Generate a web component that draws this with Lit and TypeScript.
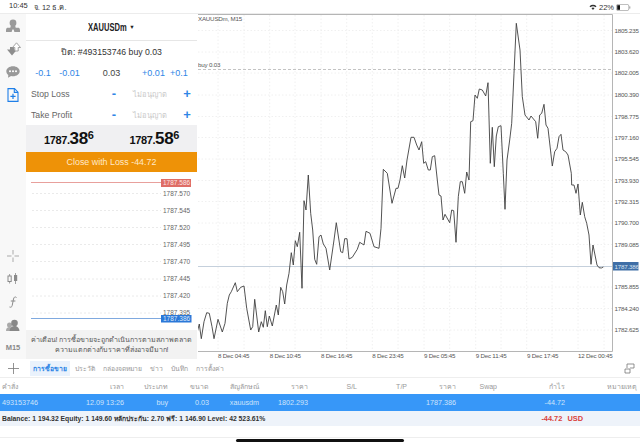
import { LitElement, html, css, svg } from "lit";
import { customElement } from "lit/decorators.js";

const PTS = "198.3,331.7 200.3,324 202.3,338.7 205,321.7 207.7,312.7 210.3,313.3 213,326.7 215,338.7 219,319.3 223.3,332 226,323.3 228.3,303.3 230.3,295 232.3,291.7 236.3,282.7 238.3,291.7 241.7,287.3 245,286 247.7,308.3 251.7,330 253.7,326.7 255.7,299.3 259.7,332 262.3,321.7 264.3,327.3 266.3,310.7 268.3,326.7 270.3,316 273.3,326 277.3,305 279.3,315 281.7,287.3 283.7,291.7 285.7,304 287.7,285 290,273.3 292.3,252.7 294.3,265 296.3,240.7 298.3,246.7 300.7,232.3 303,288.3 305,200.7 307,210 309.3,175 311.7,213.3 313.7,230 315.7,259.3 317.7,264.3 320,236.7 322,235 324.3,244 327,248.3 330.7,270 335,240 337.3,222.7 341.7,251.7 343.7,252.7 345.7,238.7 348,238.7 350,259 353.3,257.3 358.3,249.3 360.7,242.3 365,245 367,231.3 371,233.3 375,246.7 380,248.3 382,228.3 384.3,169.3 388.3,173.3 393,203.3 397,188.3 399,188.3 401,180 403.3,165.7 405.7,178 408,160 412,137.3 415,137.3 417.7,145 420,150 422.7,141.7 424.7,163.3 426.7,161.7 429.3,170 431.3,170 433.3,156.7 435.7,155.7 438.3,180 440,195 442,196 444,220 446,214.3 450.7,222.7 452.7,210 454.7,210.7 457,242.3 459.3,196.7 461.3,181.7 463.3,181.7 465.7,193.3 467.7,172 470,180 471.7,121.7 474,120.7 476,95 478.3,98.3 480.3,89 483.3,90 486.7,96 489,82.7 491.3,163.3 493.3,127.3 495.3,166.7 497.3,136 499.3,126.7 502,125.7 504.3,173.3 506,209.3 508,160 510.7,140 512.7,123.3 515,73.3 517.3,23.3 521,50 523.3,96.7 526,115 530,120 532,116 536.7,121.7 538.7,138.3 540.7,115 542.7,113.3 545,104.3 547,125 549,128.3 553.3,166 555.7,151.7 558,148.3 560,136.7 562,134.3 564,150 566.7,151.7 569,155 572.3,173.3 572.7,185 575,185 577,193.3 579,184 581.3,215 583.3,202.3 585.7,216.7 587.7,223.3 590,235 592,264.3 594,245 598,265 600,267.7 602.3,268 604.3,267";

const HLINES = [30.5, 52, 73, 95, 116.5, 137.5, 159, 180.5, 201.5, 223, 244.5, 287, 308.5, 330];
const PRICES: [string, number][] = [
  ["1805.235", 30.5], ["1803.620", 52], ["1802.005", 73], ["1800.390", 95], ["1798.775", 116.5],
  ["1797.160", 137.5], ["1795.545", 159], ["1793.930", 180.5], ["1792.315", 201.5], ["1790.700", 223],
  ["1789.085", 244.5], ["1785.855", 287], ["1784.240", 308.5], ["1782.625", 330],
];
const VLINES = [219, 245, 270.7, 296, 322, 347.7, 373.3, 399, 425, 450.7, 476.7, 502, 527.7, 553, 579, 605];
const DATES: [string, number][] = [
  ["8 Dec 04:45", 219], ["8 Dec 10:45", 270.7], ["8 Dec 16:45", 322], ["8 Dec 23:45", 373.3],
  ["9 Dec 05:45", 425], ["9 Dec 11:45", 476.7], ["9 Dec 17:45", 528], ["12 Dec 00:45", 579],
];
const LADDER: [string, number][] = [
  ["1787.570", 193.5], ["1787.545", 210.5], ["1787.520", 227.5], ["1787.495", 244.5],
  ["1787.470", 261.5], ["1787.445", 279], ["1787.420", 296], ["1787.395", 313],
];
const TABS = ["การซื้อขาย", "ประวัติ", "กล่องจดหมาย", "ข่าว", "บันทึก", "การตั้งค่า"];
const HEAD = ["คำสั่ง", "เวลา", "ประเภท", "ขนาด", "สัญลักษณ์", "ราคา", "S/L", "T/P", "ราคา", "Swap", "กำไร", "หมายเหตุ"];
const ROW = ["493153746", "12.09 13:26", "buy", "0.03", "xauusdm", "1802.293", "", "", "1787.386", "", "-44.72", ""];

@customElement("app-root")
export class AppRoot extends LitElement {
  static styles = css`
    :host { display: flex; flex-direction: column; width: 640px; height: 447px; overflow: hidden; background: #fff;
      font-family: "Liberation Sans", "Noto Sans", sans-serif; color: #333; }
    .status { height: 14px; flex: none; box-sizing: border-box; display: flex; align-items: center; justify-content: space-between;
      padding: 1px 9px 0 9px; font-size: 7.5px; color: #333; border-bottom: 1px solid #ececec; }
    .status .left { display: flex; gap: 6px; }
    .status .right { display: flex; align-items: center; gap: 2px; font-size: 7.5px; }
    .main { height: 345px; flex: none; display: flex; }
    .side { width: 26px; flex: none; background: #f8f8f8; display: flex; flex-direction: column; justify-content: space-between; }
    .ico { height: 23px; display: flex; align-items: center; justify-content: center; }
    .m15 { font-size: 7.5px; font-weight: bold; color: #8a8a8a; }
    .panel { width: 171px; flex: none; display: flex; flex-direction: column; background: #fff; }
    .title { height: 26px; display: flex; align-items: center; justify-content: center; gap: 3px; font-size: 10.5px; font-weight: bold;
      color: #222; border-bottom: 1px solid #e6e6e6; }
    .sym { display: block; width: 38px; transform: scaleX(0.72); transform-origin: left center; white-space: nowrap; }
    .caret { font-size: 5.5px; font-weight: normal; }
    .close { height: 21px; display: flex; align-items: center; justify-content: center; font-size: 8.7px; color: #333; }
    .steps { height: 21px; display: grid; grid-template-columns: 26px 27px 57px 27px 24px; padding-left: 4px; align-items: center;
      text-align: center; font-size: 9px; color: #2f86e6; }
    .steps .qty { color: #444; }
    .lim { height: 21px; display: grid; grid-template-columns: 75px 16px 56px 18px; padding-left: 5px; align-items: center;
      font-size: 8.7px; color: #666; }
    .lim .btn { text-align: center; color: #2f86e6; font-size: 13px; font-weight: bold; }
    .lim .val { text-align: center; color: #c8c8c8; font-size: 7.5px; }
    .quotes { height: 27px; display: grid; grid-template-columns: 1fr 1fr; background: #f0f0f2; align-items: center;
      text-align: center; font-weight: bold; color: #111; font-size: 11px; letter-spacing: -0.4px; }
    .quotes b { font-size: 17px; letter-spacing: -0.4px; }
    .quotes sup { font-size: 11px; line-height: 0; vertical-align: 5px; }
    .cta { height: 20px; display: flex; align-items: center; justify-content: center; background: #ee9207; color: #ffe9c8; font-size: 8.9px; }
    .ladder { display: block; width: 171px; height: 158px; flex: none; }
    .warn { height: 29px; flex: none; background: #f2f2f2; font-size: 7.1px; color: #555; text-align: center; line-height: 9.5px;
      padding-top: 6px; box-sizing: border-box; white-space: nowrap; }
    .chart { display: block; margin-left: 1px; width: 442px; height: 345px; flex: none; }
    .tabs { height: 19px; flex: none; display: flex; align-items: center; border-bottom: 1px solid #eee; box-sizing: border-box; }
    .plus { width: 26px; display: flex; justify-content: center; flex: none; margin-right: 4px; }
    .tab { font-size: 6.8px; color: #999; padding: 2px 3px; margin-right: 2px; }
    .tab.on { background: #eaf2fc; color: #2f86e6; font-weight: bold; }
    .tabs .win { margin-left: auto; margin-right: 5px; display: flex; }
    .grid { display: grid; grid-template-columns: 60px 62px 44px 41px 50px 49px 49px 50px 49px 41px 68px 72px; padding-left: 2px;
      align-items: center; white-space: nowrap; }
    .grid > span { text-align: right; }
    .grid > span:first-child { text-align: left; }
    .thead { height: 16px; flex: none; font-size: 7px; color: #999; }
    .tsel { height: 17px; flex: none; background: #3797f8; color: #cfe4fb; font-size: 7.2px; }
    .bal { height: 15px; flex: none; background: #eef3fa; display: flex; align-items: center; font-size: 6.8px; font-weight: bold;
      color: #333; padding-left: 2px; white-space: nowrap; }
    .bal .pl { margin-left: auto; margin-right: 57px; color: #d9423c; font-weight: bold; font-size: 7.4px; word-spacing: 3px; }
    .foot { flex: 1; margin-top: 11px; border-top: 1px solid #eee; display: flex; justify-content: center; align-items: flex-start; padding-top: 1px; }
    .home { width: 168px; height: 3px; border-radius: 2px; background: #111; }
    svg text { font-family: "Liberation Sans", sans-serif; }
    .ax { font-size: 6.2px; letter-spacing: -0.2px; fill: #555; }
    .axl { fill: #dbe6f3; }
    .lad { font-size: 6.5px; fill: #666; }
    .ladr { fill: #fbe6e4; }
    .ladb { fill: #dbe9fa; }
  `;

  private chart() {
    return svg`<svg class="chart" viewBox="199 14 442 345">
      ${HLINES.map((y) => svg`<line x1="199" x2="613" y1=${y} y2=${y} stroke="#ececec" stroke-width="0.8" stroke-dasharray="1.5 2"/>`)}
      ${VLINES.map((x) => svg`<line x1=${x} x2=${x} y1="15" y2="351" stroke="#ececec" stroke-width="0.8" stroke-dasharray="1.5 2"/>`)}
      <line x1="199" x2="613" y1="69.5" y2="69.5" stroke="#b4b4b4" stroke-width="0.8" stroke-dasharray="3 2"/>
      <line x1="199" x2="613" y1="266.5" y2="266.5" stroke="#c5d0dc" stroke-width="1"/>
      <path d="M198.5 14.5H613.5V351.5H198.5Z" fill="none" stroke="#b5b5b5" stroke-width="1"/>
      <polyline points=${PTS} fill="none" stroke="#404040" stroke-width="0.9" stroke-linejoin="round"/>
      <text class="ax" x="199" y="20.5">XAUUSDm, M15</text>
      <text class="ax" x="199" y="67">buy 0.03</text>
      ${PRICES.map(([t, y]) => svg`<text class="ax" x="615.5" y=${y + 2.3}>${t}</text>`)}
      <rect x="614" y="262" width="25.5" height="8.5" fill="#3f6ea6"/>
      <text class="ax axl" x="615.5" y="268.8">1787.386</text>
      ${DATES.map(([t, x]) => svg`<text class="ax" x=${x} y="357.5">${t}</text>`)}
    </svg>`;
  }

  private ladder() {
    return svg`<svg class="ladder" viewBox="26 172 171 158">
      ${LADDER.map(([t, y]) => svg`
        <line x1="32" x2="161" y1=${y} y2=${y} stroke="#e4e4e4" stroke-width="0.8" stroke-dasharray="2 2"/>
        <text class="lad" x="163" y=${y + 2.4}>${t}</text>`)}
      <line x1="31" x2="161" y1="182.5" y2="182.5" stroke="#e8a09c" stroke-width="1"/>
      <rect x="161" y="179" width="30" height="8" fill="#df6d66"/>
      <text class="lad ladr" x="163" y="185.4">1787.586</text>
      <line x1="31" x2="161" y1="318.5" y2="318.5" stroke="#7fa9df" stroke-width="1"/>
      <rect x="161" y="315" width="30.5" height="7.5" fill="#2b78d8"/>
      <text class="lad ladb" x="163" y="321.2">1787.386</text>
    </svg>`;
  }

  render() {
    return html`
      <div class="status">
        <div class="left"><span>10:45</span><span>จ. 12 ธ.ค.</span></div>
        <div class="right">
          <svg width="8" height="7" viewBox="0 0 8 7"><path d="M0.5 2.2C2.5 0.4 5.5 0.4 7.5 2.2L6.5 3.2C5 2 3 2 1.5 3.2ZM2.4 4.1C3.4 3.3 4.6 3.3 5.6 4.1L4 6Z" fill="#333"/></svg>
          <span>22%</span>
          <svg width="15" height="7" viewBox="0 0 15 7"><rect x="0.4" y="0.4" width="12.4" height="6.2" rx="1.6" fill="none" stroke="#999" stroke-width="0.7"/><rect x="1.2" y="1.2" width="2.8" height="4.6" fill="#111"/><rect x="13.3" y="2.4" width="1" height="2.2" fill="#999"/></svg>
        </div>
      </div>
      <div class="main">
        <div class="side">
          <div>
            <div class="ico"><svg width="14" height="14" viewBox="0 0 14 14" fill="#9a9a9a"><circle cx="7" cy="4" r="3.4"/><path d="M4.8 6.8h4.4l.5 2h3c.6 0 1.3.9 1.3 2.6V13H8.4L7.6 10.5h-1.2L5.6 13H0v-1.6C0 9.7.7 8.8 1.3 8.8h3z"/></svg></div>
            <div class="ico"><svg width="15" height="14" viewBox="0 0 15 14"><path d="M1 7.5h3V5h4v2.5h3L6 13.5z" fill="#8e8e8e"/><path d="M6.5 5.5L10.5 .8l4 4.7h-2.3V9H8.8V5.5z" fill="#fff" stroke="#8e8e8e" stroke-width=".8"/></svg></div>
            <div class="ico"><svg width="14" height="12" viewBox="0 0 14 12"><path d="M7 .3c3.7 0 6.7 2.2 6.7 5s-3 5-6.7 5c-.7 0-1.3-.1-1.9-.2L2 11.7l.3-2.7C1 8.1.3 6.8.3 5.3c0-2.8 3-5 6.700-5z" fill="#999"/><circle cx="4" cy="5.3" r="1" fill="#fff"/><circle cx="7" cy="5.3" r="1" fill="#fff"/><circle cx="10" cy="5.3" r="1" fill="#fff"/></svg></div>
            <div class="ico"><svg width="12" height="14" viewBox="0 0 12 14" fill="none" stroke="#1f7fe8" stroke-width="1.1"><path d="M1 .6h6.500L11 4.200V13.400H1z"/><path d="M7.300 .8V4.400H11"/><path d="M6 5.800v5.200M3.400 8.400h5.200" stroke-width="1.2"/></svg></div>
          </div>
          <div>
            <div class="ico"><svg width="12" height="12" viewBox="0 0 12 12" stroke="#aaa" stroke-width="1"><path d="M6 0v4.500M6 7.500V12M0 6h4.500M7.500 6H12"/></svg></div>
            <div class="ico"><svg width="12" height="11" viewBox="0 0 12 11" fill="none" stroke="#8a8a8a"><rect x="1" y="3" width="3.2" height="5.500" stroke-width="1"/><path d="M2.600 1v2M2.600 8.500v2M8.500 0v11" stroke-width=".8"/><rect x="7" y="2" width="3.2" height="6" fill="#8a8a8a" stroke="none"/></svg></div>
            <div class="ico"><svg width="10" height="12" viewBox="0 0 10 12" fill="none" stroke="#8a8a8a" stroke-width="1"><path d="M8.500 1.500C7 .4 6 1 5.500 3L4.200 9.500C3.800 11.200 2.800 11.500 1.500 11"/><path d="M2.800 5h4.600"/></svg></div>
            <div class="ico"><svg width="14" height="12" viewBox="0 0 14 12"><circle cx="3.500" cy="6" r="2.500" fill="#aaa"/><path d="M0 12c0-3 1.500-4 3.500-4s3.500 1 3.500 4z" fill="#aaa"/><circle cx="8.500" cy="4" r="3.300" fill="#888"/><path d="M3.500 12c.3-3.500 2.500-5 5-5s4.700 1.500 5 5z" fill="#888"/></svg></div>
            <div class="ico m15">M15</div>
          </div>
        </div>
        <div class="panel">
          <div class="title"><span class="sym">XAUUSDm</span><span class="caret">▼</span></div>
          <div class="close">ปิด: #493153746 buy 0.03</div>
          <div class="steps"><span>-0.1</span><span>-0.01</span><span class="qty">0.03</span><span>+0.01</span><span>+0.1</span></div>
          <div class="lim"><span>Stop Loss</span><span class="btn">-</span><span class="val">ไม่อนุญาต</span><span class="btn">+</span></div>
          <div class="lim"><span>Take Profit</span><span class="btn">-</span><span class="val">ไม่อนุญาต</span><span class="btn">+</span></div>
          <div class="quotes"><span>1787.<b>38</b><sup>6</sup></span><span>1787.<b>58</b><sup>6</sup></span></div>
          <div class="cta">Close with Loss -44.72</div>
          ${this.ladder()}
          <div class="warn">ค่าเตือน! การซื้อขายจะถูกดำเนินการตามสภาพตลาด<br />ความแตกต่างกับราคาที่ส่งอาจมีมาก!</div>
        </div>
        ${this.chart()}
      </div>
      <div class="tabs">
        <span class="plus"><svg width="11" height="11" viewBox="0 0 11 11" stroke="#777" stroke-width="0.8"><path d="M5.500 0v11M0 5.500h11"/></svg></span>
        ${TABS.map((t, i) => html`<span class="tab ${i === 0 ? "on" : ""}">${t}</span>`)}
        <span class="win"><svg width="11" height="11" viewBox="0 0 11 11" fill="none" stroke="#777" stroke-width="0.8"><path d="M3 5V1h7v4H6M1 6h5v4H1z"/></svg></span>
      </div>
      <div class="grid thead">${HEAD.map((t) => html`<span>${t}</span>`)}</div>
      <div class="grid tsel">${ROW.map((t) => html`<span>${t}</span>`)}</div>
      <div class="bal"><span>Balance: 1 194.32 Equity: 1 149.60 หลักประกัน: 2.70 ฟรี: 1 146.90 Level: 42 523.61%</span><span class="pl">-44.72 USD</span></div>
      <div class="foot"><div class="home"></div></div>
    `;
  }
}
